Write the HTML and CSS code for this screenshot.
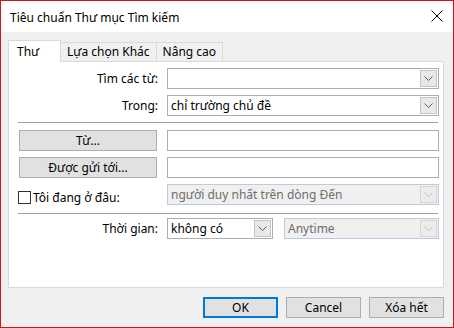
FILE: index.html
```html
<!DOCTYPE html>
<html lang="vi">
<head>
    <meta charset="UTF-8">
    <title>Tiêu chuẩn Thư mục Tìm kiếm</title>
    <link rel="stylesheet" href="styles.css">
</head>
<body>

<div class="window">
    <div class="titlebar">
        <span class="title">Tiêu chuẩn Thư mục Tìm kiếm</span>
        <svg class="close" width="12" height="12" viewBox="0 0 12 12">
            <path d="M0.5 0.5 L11.5 11.5 M11.5 0.5 L0.5 11.5" stroke="#000" stroke-width="1" fill="none"/>
        </svg>
    </div>

    <div class="content">
        <div class="tabs">
            <div class="tab active">Thư</div>
            <div class="tab">Lựa chọn Khác</div>
            <div class="tab">Nâng cao</div>
        </div>

        <div class="panel">
            <div class="row">
                <label class="label">Tìm các từ:</label>
                <div class="combo">
                    <span class="value"></span>
                    <span class="drop"><svg width="9" height="5" viewBox="0 0 9 5"><path d="M0.5 0.5 L4.5 4.5 L8.5 0.5" stroke="#606060" fill="none"/></svg></span>
                </div>
            </div>
            <div class="row">
                <label class="label">Trong:</label>
                <div class="combo">
                    <span class="value">chỉ trường chủ đề</span>
                    <span class="drop"><svg width="9" height="5" viewBox="0 0 9 5"><path d="M0.5 0.5 L4.5 4.5 L8.5 0.5" stroke="#606060" fill="none"/></svg></span>
                </div>
            </div>

            <div class="sep"></div>

            <div class="row">
                <div class="label"><button type="button" class="btn wide">Từ...</button></div>
                <input type="text" class="field">
            </div>
            <div class="row">
                <div class="label"><button type="button" class="btn wide">Được gửi tới...</button></div>
                <input type="text" class="field">
            </div>
            <div class="row row-check">
                <div class="label check-label">
                    <span class="checkbox"></span>
                    <span>Tôi đang ở đâu:</span>
                </div>
                <div class="combo disabled">
                    <span class="value">người duy nhất trên dòng Đến</span>
                    <span class="drop"><svg width="9" height="5" viewBox="0 0 9 5"><path d="M0.5 0.5 L4.5 4.5 L8.5 0.5" stroke="#bfbfbf" fill="none"/></svg></span>
                </div>
            </div>

            <div class="sep sep-2"></div>

            <div class="row">
                <label class="label">Thời gian:</label>
                <div class="pair">
                    <div class="combo small">
                        <span class="value">không có</span>
                        <span class="drop"><svg width="9" height="5" viewBox="0 0 9 5"><path d="M0.5 0.5 L4.5 4.5 L8.5 0.5" stroke="#606060" fill="none"/></svg></span>
                    </div>
                    <div class="combo disabled grow">
                        <span class="value">Anytime</span>
                        <span class="drop"><svg width="9" height="5" viewBox="0 0 9 5"><path d="M0.5 0.5 L4.5 4.5 L8.5 0.5" stroke="#bfbfbf" fill="none"/></svg></span>
                    </div>
                </div>
            </div>
        </div>

        <div class="actions">
            <button type="button" class="btn default">OK</button>
            <button type="button" class="btn">Cancel</button>
            <button type="button" class="btn">Xóa hết</button>
        </div>
    </div>
</div>

</body>
</html>
```

FILE: styles.css
```css
html, body {
    margin: 0;
    padding: 0;
}
body {
    font-family: 'Noto Sans', 'Open Sans', sans-serif;
    font-size: 12px;
    color: #000;
    background-color: #f0f0f0;
}
.window {
    width: 454px;
    height: 328px;
    box-sizing: border-box;
    border: 1px solid #d4141c; /* accent red */
    background-color: #f0f0f0;
    display: flex;
    flex-direction: column;
}
.titlebar {
    height: 31px;
    background-color: #fff;
    display: flex;
    align-items: center;
    justify-content: space-between;
    padding: 0 10px 0 9px;
    flex-shrink: 0;
}
.title {
    font-size: 12px;
    line-height: 16px;
    margin-top: 2px;
}
.close {
    display: block;
    margin-top: -1px;
}
.content {
    padding: 8px 0 0 7px;
}
.tabs {
    display: flex;
    align-items: flex-end;
    height: 21px;
}
.tab {
    height: 19px;
    line-height: 18px;
    padding: 0 6px;
    border: 1px solid #d9d9d9;
    border-bottom: none;
    border-left: none;
    box-sizing: border-box;
    background-color: #f0f0f0;
}
.tab.active {
    height: 22px;
    width: 53px;
    padding: 0 8px;
    line-height: 22px;
    background-color: #fff;
    border-left: 1px solid #d9d9d9;
    position: relative;
    z-index: 1;
    margin-bottom: -1px;
}
.panel {
    width: 436px;
    height: 227px;
    box-sizing: border-box;
    background-color: #fff;
    border: 1px solid #d9d9d9;
    padding: 6px 4px 0 9px;
}
.row {
    display: flex;
    align-items: center;
    gap: 9px;
    height: 21px;
    margin-bottom: 6px;
}
.label {
    width: 140px;
    flex-shrink: 0;
    text-align: right;
    display: flex;
    justify-content: flex-end;
    align-items: center;
}
.combo, .field {
    width: 272px;
    height: 21px;
    box-sizing: border-box;
    border: 1px solid #adadad;
    background-color: #fff;
    display: flex;
    align-items: center;
    justify-content: space-between;
}
.field {
    font: inherit;
    padding: 0 3px;
    outline: none;
}
.value {
    padding-left: 3px;
    white-space: nowrap;
}
.drop {
    width: 17px;
    height: 17px;
    box-sizing: border-box;
    margin-right: 1px;
    border: 1px solid #c4c4c4;
    background-color: #e8e8e8;
    display: flex;
    align-items: center;
    justify-content: center;
}
.combo.disabled {
    background-color: #f0f0f0;
    border-color: #b9cbe2;
    color: #6d6d6d;
}
.combo.disabled .drop {
    border-color: #d6d6d6;
    background-color: #ececec;
}
.sep {
    height: 1px;
    background-color: #a0a0a0;
    margin: 2px 1px 7px 0;
}
.sep-2 {
    margin-top: 8px;
    margin-bottom: 4px;
}
.btn {
    font: inherit;
    color: #000;
    height: 21px;
    width: 75px;
    padding: 0;
    background-color: #e1e1e1;
    border: 1px solid #adadad;
    box-sizing: border-box;
    cursor: pointer;
}
.btn.wide {
    width: 138px;
    margin-right: 1px;
}
.btn.default {
    border: 2px solid #0078d7;
}
.row-check {
    margin-bottom: 0;
}
.check-label {
    justify-content: flex-start;
    gap: 2px;
    margin-top: 6px;
}
.checkbox {
    width: 13px;
    height: 13px;
    box-sizing: border-box;
    border: 1px solid #333;
    background-color: #fff;
    display: inline-block;
}
.pair {
    width: 272px;
    display: flex;
    gap: 11px;
}
.combo.small {
    width: 106px;
}
.combo.grow {
    flex-grow: 1;
    width: auto;
}
.actions {
    display: flex;
    justify-content: flex-end;
    gap: 8px;
    padding: 9px 9px 0 0;
}
```
